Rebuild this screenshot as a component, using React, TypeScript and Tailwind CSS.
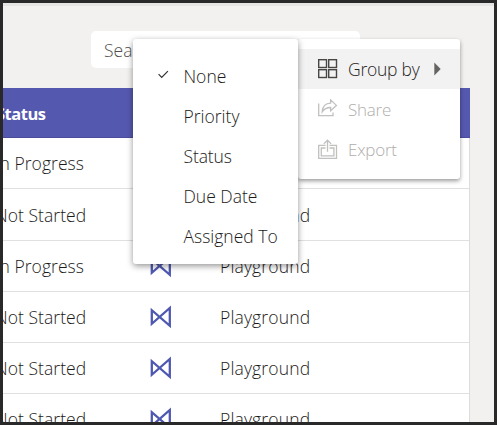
import type { ReactNode } from "react";

const rows = [
  { status: "In Progress", height: "h-[51px]" },
  { status: "Not Started", height: "h-[52px]" },
  { status: "In Progress", height: "h-[51px]" },
  { status: "Not Started", height: "h-[51px]" },
  { status: "Not Started", height: "h-[51px]" },
  { status: "Not Started", height: "h-[51px]" },
];

const groupOptions = [
  { label: "None", spacing: "tracking-[0px]" },
  { label: "Priority", spacing: "tracking-[0px]" },
  { label: "Status", spacing: "tracking-[-0.1px]" },
  { label: "Due Date", spacing: "tracking-[0px]" },
  { label: "Assigned To", spacing: "tracking-[0px]" },
];

function SourceIcon() {
  return (
    <svg className="shrink-0" width="22" height="24" viewBox="0 0 22 24" fill="none" stroke="#4f58b0" strokeWidth="2.3">
      <path d="M1.8 5.2 V18.8 L19.8 3 V20.8 Z" strokeLinejoin="miter" />
    </svg>
  );
}

function GridIcon() {
  return (
    <svg width="20" height="20" viewBox="0 0 20 20" fill="none" stroke="#484644" strokeWidth="1.4">
      <rect x="0.7" y="0.7" width="7.8" height="7.8" />
      <rect x="10.7" y="0.7" width="7.8" height="7.8" />
      <rect x="0.7" y="10.7" width="7.8" height="7.8" />
      <rect x="10.7" y="10.7" width="7.8" height="7.8" />
    </svg>
  );
}

function ShareIcon() {
  return (
    <svg width="20" height="20" viewBox="0 0 20 20" fill="none" stroke="#c2c0be" strokeWidth="1.3">
      <path d="M0.7 4.5 V16.6 H15 V13.5" />
      <path d="M4.2 12.8 C4.6 7.6 7.5 4.3 12.6 4.2 V0.9 L18.4 6.4 L12.6 11.8 V8.5 C8.8 8.4 6.3 9.8 4.2 12.8 Z" />
    </svg>
  );
}

function ExportIcon() {
  return (
    <svg width="20" height="21" viewBox="0 0 20 21" fill="none" stroke="#c2c0be" strokeWidth="1.3">
      <path d="M7.5 6.3 H0.7 V19.4 H18.5 V6.3 H11.5" />
      <path d="M7.5 9 H3.3 V16.8 H15.9 V9 H11.5" />
      <path d="M9.5 12.8 V1.2 M5.8 4.9 L9.5 1.2 L13.2 4.9" />
    </svg>
  );
}

function ActionItem({ icon, children, active = false }: { icon: ReactNode; children: ReactNode; active?: boolean }) {
  return (
    <div className={active ? "flex h-10 items-center bg-[#f3f2f2] pl-5 text-[#252423]" : "flex h-10 items-center pl-5 text-[17px] text-[#b0aeac]"}>
      <span className="flex w-[30px]">{icon}</span>
      <span className={active ? "tracking-[-0.25px]" : "pt-px tracking-[-0.25px]"}>{children}</span>
      {active && (
        <svg className="ml-auto mr-[19px]" width="7" height="14" viewBox="0 0 7 14">
          <path d="M0.3 0.4 L6.7 7 L0.3 13.6 Z" fill="#656463" />
        </svg>
      )}
    </div>
  );
}

export default function App() {
  return (
    <div className="relative h-[425px] w-[497px] overflow-hidden border-[3px] border-[#292929] bg-[#f2f1f0] font-['Open_Sans','Noto_Sans',sans-serif] text-[17.5px] font-light leading-6 text-[#1b1a19]">
      <div className="h-[3px] bg-[#e6e5e4]" />
      <div className="flex h-[82px] pl-[88px] pt-[25px]">
        <div className="h-[37px] w-[269px] rounded-[5px] bg-white pl-[13px] pt-[7px] text-[#504e4c]">Search</div>
      </div>
      <div className="w-[467px]">
        <div className="flex h-[50px] items-center border-b border-[#4b4c9b] bg-[#5558af]">
          <span className="-ml-[7px] pt-[3px] text-[16.5px] font-bold tracking-[-0.5px] text-white">Status</span>
        </div>
        <div className="border-r border-[#dddcdb] bg-white">
          {rows.map((row, i) => (
            <div key={i} className={`flex items-center border-b border-[#e1e0df] ${row.height}`}>
              <span className="-ml-[8px] w-[155px] whitespace-nowrap tracking-[0.05px]">{row.status}</span>
              <span className="flex w-[70px]">
                <SourceIcon />
              </span>
              <span className="tracking-[0.15px]">Playground</span>
            </div>
          ))}
        </div>
      </div>

      <div className="absolute left-[295px] top-9 h-[140px] w-[162px] rounded-[3px] bg-white pt-[10px] shadow-[0_2px_4px_rgba(0,0,0,0.4)]">
        <ActionItem icon={<GridIcon />} active>Group by</ActionItem>
        <ActionItem icon={<ShareIcon />}>Share</ActionItem>
        <ActionItem icon={<ExportIcon />}>Export</ActionItem>
      </div>

      <div className="absolute left-[130px] top-9 h-[225px] w-[165px] rounded-[3px] bg-white pt-[17px] shadow-[0_2px_6px_rgba(0,0,0,0.42)]">
        {groupOptions.map((option, i) => (
          <div key={option.label} className="flex h-10 items-center pl-[25px]">
            <span className="flex w-[25.5px] pb-[3px]">
              {i === 0 && (
                <svg width="11" height="9" viewBox="0 0 11 9" fill="none" stroke="#323130" strokeWidth="1.2">
                  <path d="M0.6 4.2 L3.7 7.3 L9.9 1.1" />
                </svg>
              )}
            </span>
            <span className={option.spacing}>{option.label}</span>
          </div>
        ))}
      </div>
    </div>
  );
}
